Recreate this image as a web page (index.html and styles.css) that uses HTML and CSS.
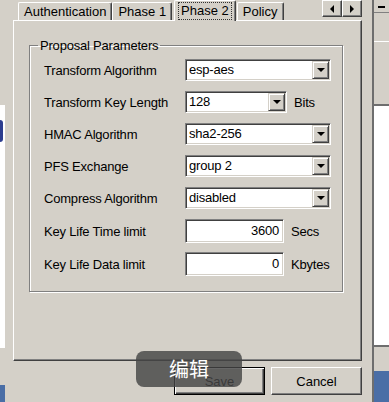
FILE: index.html
```html
<!DOCTYPE html>
<html lang="en">
<head>
    <meta charset="UTF-8">
    <title>Phase 2</title>
    <link rel="stylesheet" href="styles.css">
</head>
<body>
    <div class="edge-left">
        <div class="edge-top"></div>
        <div class="edge-white"><div class="edge-blue"></div></div>
        <div class="edge-gray"></div>
        <div class="edge-foot"></div>
    </div>

    <div class="dialog">
        <div class="tabs">
            <div class="tab">Authentication</div>
            <div class="tab">Phase 1</div>
            <div class="tab active"><span class="focus">Phase 2</span></div>
            <div class="tab">Policy</div>
            <div class="tab-scroll">
                <div class="arrow-btn"><span class="arrow left"></span></div>
                <div class="arrow-btn"><span class="arrow right"></span></div>
            </div>
        </div>

        <div class="panel">
            <fieldset class="group">
                <legend>Proposal Parameters</legend>
                <div class="params">
                    <div class="label">Transform Algorithm</div>
                    <div class="control">
                        <div class="combo"><span class="value">esp-aes</span><span class="drop"><span class="tri"></span></span></div>
                    </div>

                    <div class="label">Transform Key Length</div>
                    <div class="control">
                        <div class="combo short"><span class="value">128</span><span class="drop"><span class="tri"></span></span></div>
                        <span class="unit">Bits</span>
                    </div>

                    <div class="label">HMAC Algorithm</div>
                    <div class="control">
                        <div class="combo"><span class="value">sha2-256</span><span class="drop"><span class="tri"></span></span></div>
                    </div>

                    <div class="label">PFS Exchange</div>
                    <div class="control">
                        <div class="combo"><span class="value">group 2</span><span class="drop"><span class="tri"></span></span></div>
                    </div>

                    <div class="label">Compress Algorithm</div>
                    <div class="control">
                        <div class="combo"><span class="value">disabled</span><span class="drop"><span class="tri"></span></span></div>
                    </div>

                    <div class="label">Key Life Time limit</div>
                    <div class="control">
                        <div class="field">3600</div>
                        <span class="unit">Secs</span>
                    </div>

                    <div class="label">Key Life Data limit</div>
                    <div class="control">
                        <div class="field">0</div>
                        <span class="unit">Kbytes</span>
                    </div>
                </div>
            </fieldset>
        </div>

        <div class="actions">
            <div class="btn default"><span class="btn-inner">Save</span></div>
            <div class="btn"><span class="btn-inner">Cancel</span></div>
        </div>

        <div class="toast">编辑</div>
    </div>

    <div class="edge-right">
        <div class="min-btn"><span class="dash"></span></div>
        <div class="side-bar"></div>
        <div class="side-white"></div>
        <div class="side-gray"></div>
        <div class="side-blue"></div>
    </div>
</body>
</html>
```

FILE: styles.css
```css
* {
    box-sizing: border-box;
}
body {
    margin: 0;
    width: 389px;
    height: 402px;
    overflow: hidden;
    display: flex;
    background-color: #d4d0c8;
    color: #000;
    font-family: "Liberation Sans", Arial, sans-serif;
    font-size: 13px;
}

/* window bits peeking in at the sides */
.edge-left {
    width: 5px;
    display: flex;
    flex-direction: column;
}
.edge-top {
    height: 105px;
}
.edge-white {
    height: 243px;
    background-color: #fff;
    padding-top: 15px;
}
.edge-blue {
    width: 3px;
    height: 22px;
    background-color: #2c3d8f;
    border-radius: 0 3px 3px 0;
}
.edge-gray {
    height: 37px;
}
.edge-foot {
    flex: 1;
    background-color: #4a6ea6;
}

.edge-right {
    width: 17px;
    display: flex;
    flex-direction: column;
    border-left: 2px solid #6e6e6e;
}
.min-btn {
    height: 13px;
    border-bottom: 1px solid #808080;
    padding: 6px 0 0 4px;
}
.dash {
    display: block;
    width: 7px;
    height: 2px;
    background-color: #000;
}
.side-bar {
    margin-top: 28px;
    height: 65px;
    border-top: 1px solid #fff;
    border-bottom: 2px solid #6e6e6e;
}
.side-white {
    height: 241px;
    background-color: #fff;
    border-bottom: 2px solid #6e6e6e;
}
.side-gray {
    height: 24px;
}
.side-blue {
    flex: 1;
    background-color: #4a6ea6;
}

/* dialog */
.dialog {
    position: relative;
    width: 367px;
    padding-left: 8px;
}
.tabs {
    height: 21px;
    display: flex;
    align-items: flex-end;
    padding-left: 5px;
    position: relative;
    z-index: 1;
}
.tab {
    height: 18px;
    padding: 0 5px;
    line-height: 17px;
    border-top: 1px solid #fff;
    border-left: 1px solid #fff;
    border-right: 1px solid #404040;
    box-shadow: inset -1px 0 #808080;
    border-radius: 2px 2px 0 0;
    margin-bottom: 1px;
}
.tab.active {
    height: 21px;
    margin: 0 1px 0 2px;
    padding: 1px 3px 0;
    background-color: #d4d0c8;
}
.focus {
    display: block;
    padding: 0 2px;
    line-height: 16px;
    border: 1px dotted #333;
}
.tab-scroll {
    margin-left: auto;
    margin-right: 10px;
    align-self: flex-start;
    display: flex;
}
.arrow-btn {
    width: 20px;
    height: 17px;
    border: 1px solid;
    border-color: #fff #404040 #404040 #fff;
    box-shadow: inset -1px -1px #808080;
    display: flex;
    align-items: center;
    justify-content: center;
}
.arrow {
    width: 0;
    height: 0;
    border-top: 4px solid transparent;
    border-bottom: 4px solid transparent;
}
.arrow.left {
    border-right: 4px solid #000;
}
.arrow.right {
    border-left: 4px solid #000;
}

.panel {
    width: 349px;
    height: 341px;
    margin-top: -1px;
    border: 1px solid;
    border-color: #fff #404040 #404040 #fff;
    box-shadow: inset -1px -1px #808080;
    padding: 17px 18px 0 15px;
}
.group {
    margin: 0;
    padding: 6px 10px 12px 14px;
    border: 1px solid #808080;
    box-shadow: inset 1px 1px #fff, 1px 1px #fff;
    height: 254px;
}
.group legend {
    margin-left: -6px;
    padding: 0 2px;
    letter-spacing: -0.2px;
}
.params {
    display: grid;
    grid-template-columns: 141px auto;
    grid-template-rows: repeat(5, 22px) 24px 24px;
    row-gap: 10px;
    letter-spacing: -0.2px;
}
.params > :nth-last-child(-n+2) {
    margin-top: -2px;
}
.label {
    display: flex;
    align-items: center;
}
.control {
    display: flex;
    align-items: center;
}
.combo {
    width: 146px;
    height: 22px;
    display: flex;
    background-color: #fff;
    border: 1px solid;
    border-color: #808080 #fff #fff #808080;
    box-shadow: inset 1px 1px #404040, inset -1px -1px #d4d0c8;
    padding: 1px;
}
.combo.short {
    width: 102px;
}
.value {
    flex: 1;
    line-height: 18px;
    padding-left: 2px;
}
.drop {
    width: 17px;
    height: 18px;
    background-color: #d4d0c8;
    border: 1px solid;
    border-color: #d4d0c8 #404040 #404040 #d4d0c8;
    box-shadow: inset 1px 1px #fff, inset -1px -1px #808080;
    display: flex;
    align-items: center;
    justify-content: center;
}
.tri {
    width: 0;
    height: 0;
    border-left: 4px solid transparent;
    border-right: 4px solid transparent;
    border-top: 4px solid #000;
}
.field {
    width: 99px;
    height: 24px;
    background-color: #fff;
    border: 1px solid;
    border-color: #808080 #fff #fff #808080;
    box-shadow: inset 1px 1px #404040, inset -1px -1px #d4d0c8;
    text-align: right;
    padding-right: 4px;
    line-height: 21px;
}
.unit {
    margin-left: 7px;
}

.actions {
    display: flex;
    justify-content: flex-end;
    gap: 6px;
    margin-top: 6px;
    width: 349px;
}
.btn {
    width: 91px;
    height: 28px;
    border: 1px solid;
    border-color: #fff #404040 #404040 #fff;
    box-shadow: inset -1px -1px #808080;
    display: flex;
    align-items: center;
    justify-content: center;
}
.btn.default {
    border: 1px solid #000;
    box-shadow: inset 1px 1px #fff, inset -1px -1px #404040, inset -2px -2px #808080;
}

/* overlay caption */
.toast {
    position: absolute;
    left: 131px;
    top: 351px;
    width: 106px;
    height: 36px;
    border-radius: 8px;
    background-color: rgba(70, 70, 70, 0.82);
    color: #fff;
    font-family: "Noto Sans CJK SC", sans-serif;
    font-size: 20px;
    line-height: 36px;
    text-align: center;
}
```
